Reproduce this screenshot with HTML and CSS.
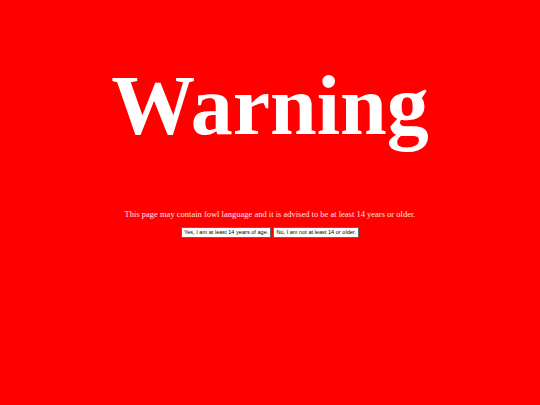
FILE: index.html
```html
<!DOCTYPE html>
<html>
<head>
<meta charset="utf-8">
<title>Warning</title>
<link rel="stylesheet" href="styles.css">
</head>
<body>
<main class="gate">
  <h1 class="title">Warning</h1>
  <p class="notice">This page may contain fowl language and it is advised to be at least 14 years or older.</p>
  <div class="actions">
    <button class="btn" type="button">Yes, I am at least 14 years of age.</button>
    <button class="btn" type="button">No, I am not at least 14 or older.</button>
  </div>
</main>
</body>
</html>
```

FILE: styles.css
```css
html, body {
  margin: 0;
  padding: 0;
  height: 100%;
  background: #ff0000;
}

.gate {
  display: flex;
  flex-direction: column;
  align-items: center;
  padding-top: 56px;
  font-family: "Liberation Serif", "Times New Roman", serif;
  color: #ffffff;
}

.title {
  margin: 0;
  font-size: 84px;
  line-height: 100px;
  font-weight: bold;
}

.notice {
  margin: 53px 0 0;
  font-size: 8.5px;
  line-height: 10px;
  color: #ffe0e0;
}

.actions {
  display: flex;
  gap: 2px;
  margin-top: 8px;
}

.btn {
  font-family: "Liberation Sans", Arial, sans-serif;
  font-size: 5.6px;
  line-height: 7px;
  padding: 1px 2px;
  background: #ffffff;
  color: #000000;
  border: 1px solid #666666;
  border-radius: 0;
}
```
